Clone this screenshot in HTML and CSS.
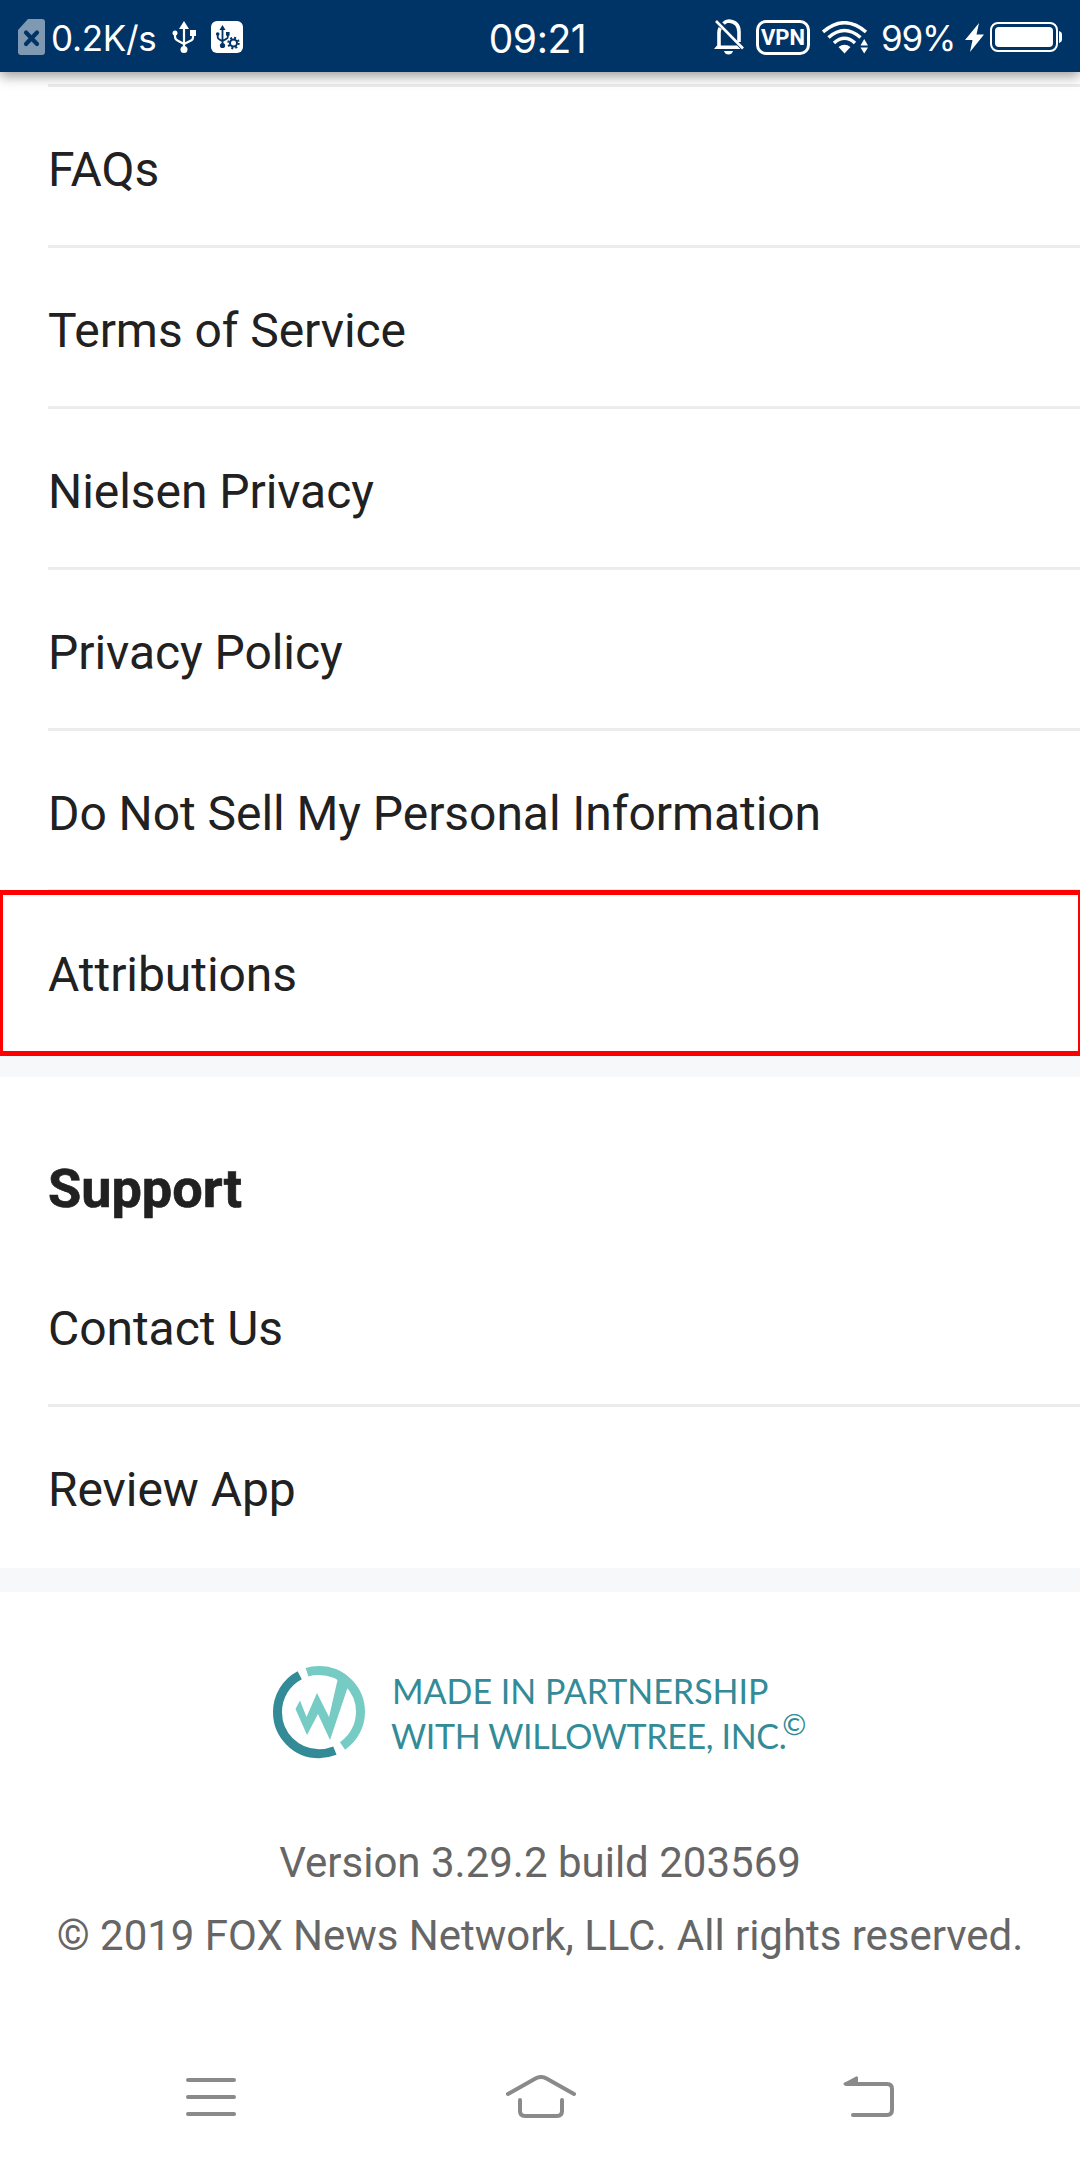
FILE: index.html
```html
<!DOCTYPE html>
<html lang="en">
<head>
<meta charset="utf-8">
<title>Settings</title>
<link rel="stylesheet" href="styles.css">
</head>
<body>
<header class="status">
  <div class="status-left">
    <svg class="sim" width="27" height="36" viewBox="0 0 27 36"><path fill="#8099b3" d="M10 0H24a3 3 0 0 1 3 3V33a3 3 0 0 1-3 3H3a3 3 0 0 1-3-3V11z"/><path stroke="#003366" stroke-width="4.2" stroke-linecap="round" d="M8 13.500l11 11.500M19 13.500L8 25"/></svg>
    <span class="speed">0.2K/s</span>
    <svg class="usb" width="24" height="32" viewBox="0 0 24 32"><path fill="#fff" d="M12 0l5 8H7z"/><circle cx="12" cy="28.500" r="3.500" fill="#fff"/><circle cx="3" cy="12" r="2.500" fill="#fff"/><path fill="#fff" d="M18 9h6v6h-6z"/><path fill="none" stroke="#fff" stroke-width="2.200" d="M12 6V28M3 12v3.500q0 3 3 4.200l6 3.300M21 14v2.500q0 2.500-3 3.500l-6 3"/></svg>
    <svg class="usb-box" width="32" height="32" viewBox="0 0 32 32"><rect width="32" height="32" rx="6" fill="#fff"/><g fill="#003366"><path d="M11.500 4l3 5h-6z"/><circle cx="11.500" cy="24.500" r="2.600"/><circle cx="6.700" cy="13" r="1.800"/><path d="M15 11h3.600v3.600H15z"/></g><path fill="none" stroke="#003366" stroke-width="1.800" d="M11.500 7v17M6.700 13v3q0 2 2 2.600l2.800 1.600M16.800 14v2q0 1.500-2 2.200l-3.300 1.800"/><circle cx="22.500" cy="22" r="6.300" fill="#fff"/><circle cx="22.500" cy="22" r="3.500" fill="none" stroke="#003366" stroke-width="2"/><circle cx="22.500" cy="22" r="5.200" fill="none" stroke="#003366" stroke-width="2" stroke-dasharray="2 2.084"/></svg>
  </div>
  <span class="clock">09:21</span>
  <div class="status-right">
    <svg class="bell" width="30" height="36" viewBox="0 0 30 36"><path fill="none" stroke="#fff" stroke-width="3.600" d="M5 28V14q0-3 1.200-5M9.500 4.500Q12 2 15 2q10 1 10 11v10"/><path stroke="#fff" stroke-width="2.600" d="M2 2l27 27.500"/><path fill="#fff" d="M3 26.500h20l3.500 3.500H0zM10 32h9q-1 3.500-4.500 3.500T10 32z"/></svg>
    <span class="vpn">VPN</span>
    <svg class="wifi" width="46" height="33" viewBox="0 0 46 33"><g fill="none" stroke="#fff" stroke-width="3.500"><path d="M1 11Q22.500-7.500 44 11"/><path d="M6.500 16.500Q22.500 2.500 38.500 16.500"/><path d="M12 22Q22.500 12.500 33 22"/></g><path fill="#fff" d="M16.500 26q6-4.500 12 0l-6 6.500zM38.500 24.500l3.700-6.500 3.800 6.500zM38.500 26.500h7.500l-3.800 6z"/></svg>
    <span class="percent">99%</span>
    <svg class="bolt" width="19" height="29" viewBox="0 0 19 29"><path fill="#fff" d="M14 0L0 17h7.500L5 29 19 11.500h-7.500z"/></svg>
    <svg class="battery" width="72" height="30" viewBox="0 0 72 30"><rect x="1" y="1" width="66" height="28" rx="7" fill="none" stroke="#fff" stroke-width="2"/><rect x="5" y="5" width="58" height="20" rx="4" fill="#fff"/><path fill="#fff" d="M69 9q3 1 3 3v6q0 2-3 3z"/></svg>
  </div>
</header>
<main>
  <ul class="list legal">
    <li>FAQs</li>
    <li>Terms of Service</li>
    <li>Nielsen Privacy</li>
    <li>Privacy Policy</li>
    <li>Do Not Sell My Personal Information</li>
    <li class="highlight">Attributions</li>
  </ul>
  <section class="support">
    <h2>Support</h2>
    <ul class="list">
      <li>Contact Us</li>
      <li>Review App</li>
    </ul>
  </section>
  <footer class="about">
    <div class="partner">
      <svg class="logo" width="92" height="93" viewBox="0 0 92 93"><path fill="none" stroke="#338b97" stroke-width="9" d="M26.700 9.200A41.500 41.500 0 0 0 4.500 46A41.500 41.500 0 0 0 46 87.700Q54 87.700 61.900 84.600"/><path fill="none" stroke="#76cbc4" stroke-width="9" d="M34 6.200Q39 4.500 46 4.500A41.500 41.500 0 0 1 87.500 46A41.500 41.500 0 0 1 69.500 80"/><path fill="#76cbc4" d="M65 12L56 51 44 27 33.500 51 27 34.500l-4.500 8.500L34 69l11-21 12 26L74.500 22z"/></svg>
      <p class="partner-text"><span>MADE IN PARTNERSHIP</span><span class="company">WITH WILLOWTREE, INC.<span class="mark">©</span></span></p>
    </div>
    <p class="version">Version 3.29.2 build 203569</p>
    <p class="rights">© 2019 FOX News Network, LLC. All rights reserved.</p>
  </footer>
</main>
<nav class="nav">
  <svg width="50" height="38" viewBox="0 0 50 38"><path stroke="#8a8a8a" stroke-width="4" stroke-linecap="round" d="M2 2h46M2 19h46M2 36h46"/></svg>
  <svg class="home" width="70" height="43" viewBox="0 0 70 43"><path fill="none" stroke="#8a8a8a" stroke-width="4" stroke-linecap="round" d="M2 19L29.500 3.500q5.500-3 11 0L68 19M14 25v11q0 5 5 5h32q5 0 5-5V25"/></svg>
  <svg class="back" width="51" height="41" viewBox="0 0 51 41"><path fill="none" stroke="#8a8a8a" stroke-width="4" stroke-linecap="round" d="M3 8h41q5 0 5 5v21q0 5-5 5H10"/><path fill="#8a8a8a" d="M1 7L13.500.3 15 1v8H1.500Q-.5 8.500 1 7z"/></svg>
</nav>
</body>
</html>
```
FILE: styles.css
```css
* { box-sizing: border-box; }
body { margin: 0; width: 1080px; height: 2160px; overflow: hidden; background: #fff; color: #212121; font-family: Roboto, sans-serif; display: flex; flex-direction: column; }
h2, p, ul { margin: 0; padding: 0; font-weight: 400; }
svg { display: block; flex: none; }
.status { position: relative; flex: none; height: 72px; background: #003366; color: #fff; display: grid; grid-template-columns: 1fr auto 1fr; align-items: center; padding: 0 18px; box-shadow: 0 4px 12px rgba(0, 0, 0, .4); font-family: Inter, sans-serif; white-space: nowrap; }
.status-left, .status-right { display: flex; align-items: center; }
.status-right { justify-content: flex-end; }
.speed { width: 106px; margin-left: 6px; font-size: 35px; letter-spacing: -.3px; line-height: 72px; padding-top: 2px; }
.usb { margin-left: 15px; }
.usb-box { margin-left: 15px; }
.clock { padding: 2px 5px 0 0; font-size: 39px; letter-spacing: -.4px; }
.vpn { width: 54px; height: 35px; margin: 0 12px; border: 3px solid #fff; border-radius: 10px; font: 700 22px/30px Roboto, sans-serif; text-align: center; }
.percent { width: 72px; margin: 2px 12px 0 13px; font-size: 35px; letter-spacing: -1.2px; }
.battery { margin-left: 6px; }
.list { list-style: none; }
.list li { height: 161px; margin-left: 48px; border-bottom: 3px solid #ececec; font-size: 48px; letter-spacing: -.06px; line-height: 166px; }
.list li:last-child { border-bottom: 0; }
.legal { margin-top: 12px; padding-top: 3px; background: linear-gradient(#ececec, #ececec) 48px 0 / 1032px 3px no-repeat; }
.list .highlight { position: relative; height: 166px; margin: -2px 0 0; padding-left: 45px; border: 5px solid #f00; border-width: 5px 3px; line-height: 160px; }
.list .highlight:last-child { border-bottom: 5px solid #f00; border-right-width: 2px; }
.support { border-top: 21px solid #f7f8fa; border-bottom: 24px solid #f7f8fa; }
.support h2 { height: 169px; padding: 80px 0 0 48px; font-size: 54px; font-weight: 700; line-height: 63px; -webkit-text-stroke: .7px #212121; }
.about { color: #666; text-align: center; font-size: 42px; }
.partner { display: flex; margin: 74px 0 0 273px; color: #338b97; font-family: Lato, sans-serif; }
.partner-text { display: flex; flex-direction: column; margin: 2px 0 0 27px; text-align: left; white-space: nowrap; font-size: 34px; line-height: 45px; }
.company { margin-left: -1px; letter-spacing: -.36px; }
.mark { position: relative; top: -14px; left: -4px; font-size: 29px; line-height: 0; }
.version { margin-top: 67px; line-height: 73px; }
.rights { line-height: 73px; letter-spacing: -.03px; white-space: nowrap; }
.nav { margin-top: auto; height: 126px; display: flex; justify-content: space-between; align-items: center; padding: 0 186px; }
.home { margin: 0 0 2px 2px; }
.back { margin-bottom: 2px; }
```
